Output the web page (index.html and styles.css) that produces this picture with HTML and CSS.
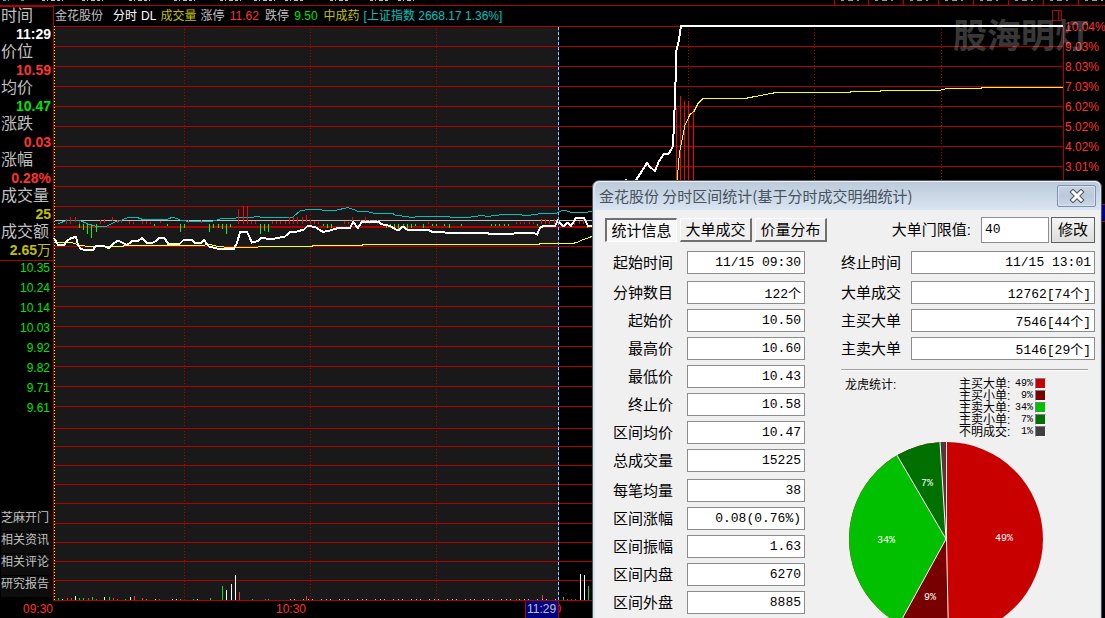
FILE: index.html
```html
<!DOCTYPE html>
<html lang="zh-CN">
<head>
<meta charset="utf-8">
<title>金花股份 分时</title>
<link rel="stylesheet" href="styles.css">
</head>
<body>
<div class="app">
  <div class="topstrip">
    <svg class="strip-marks" viewBox="0 0 834 5" preserveAspectRatio="xMinYMin slice" aria-hidden="true">
      <path class="mark-cyan" d="M3 .5H10M21 .5H25"/>
      <path class="mark-grey" d="M42 .5H66M82 .5H104M129 .5H151M174 .5H197M220 .5H242M254 .5H276M285 .5H305M330 .5H350M370 .5H388M398 .5H414"/>
    </svg>
    <div class="strip-tabs"><i></i><i></i><i></i><i></i><i></i><i></i><i></i><i></i></div>
  </div>
  <div class="workspace">
    <aside class="side">
      <dl class="quote">
        <dt>时间</dt><dd class="white">11:29</dd>
        <dt>价位</dt><dd class="up">10.59</dd>
        <dt>均价</dt><dd class="down">10.47</dd>
        <dt>涨跌</dt><dd class="up">0.03</dd>
        <dt>涨幅</dt><dd class="up">0.28%</dd>
        <dt>成交量</dt><dd class="gold">25</dd>
        <dt>成交额</dt><dd class="gold">2.65<span class="unit">万</span></dd>
      </dl>
      <ul class="prices">
        <li>10.35</li><li>10.24</li><li>10.14</li><li>10.03</li><li>9.92</li><li>9.82</li><li>9.71</li><li>9.61</li>
      </ul>
      <nav class="links">
        <a href="#">芝麻开门</a><a href="#">相关资讯</a><a href="#">相关评论</a><a href="#">研究报告</a>
      </nav>
    </aside>
    <main class="chart">
      <header class="chart-head">
        <span class="stock">金花股份</span><span class="white mode">分时</span><span class="white">DL</span><span class="gold">成交量</span><span>涨停 <b class="up">11.62</b></span><span>跌停 <b class="down">9.50</b></span><span class="gold">中成药</span><span class="index">[上证指数 2668.17 1.36%]</span>
        <svg class="pane-icon" viewBox="0 0 10 11" aria-hidden="true"><path d="M.5 .5H9.500V10.500H.5ZM6.500 .5V10.500"/></svg>
      </header>
      <svg class="plot" viewBox="53 26 1011 575" preserveAspectRatio="none" role="img" aria-label="分时走势图">
        <rect class="selected" x="54" y="26" width="505" height="575"/>
        <path class="grid" d="M54 26.500H1064M54 46.500H1064M54 66.500H1064M54 86.500H1064M54 106.500H1064M54 126.500H1064M54 146.500H1064M54 166.500H1064M54 186.500H1064M54 206.500H1064M54 246.500H1064M54 266.500H1064M54 286.500H1064M54 306.500H1064M54 326.500H1064M54 346.500H1064M54 366.500H1064M54 386.500H1064M54 406.500H1064M54 428.500H1064M54 446.500H1064M54 465.500H1064M54 484.500H1064M54 503.500H1064M54 523.500H1064M54 542.500H1064M54 561.500H1064M54 580.500H1064M1063.500 26V601"/>
        <path class="grid mid" d="M54 227H1064"/>
        <path class="dots" d="M184.500 29V600M310.500 29V600M436.500 29V600M688.500 29V600M814.500 29V600M941.500 29V600"/>
        <path class="grid" d="M53.500 26V601M53 600.500H1064"/>
        <path class="edge" d="M54.500 26V600"/>
        <path class="base" d="M55 220.500H1063"/>
        <path class="index-line" d="M58 224L66 220.500H80L88 224 95 226H107L115 222 122 220 128 217.500H137L143 219.500H167L173 217 180 220 193 222 213 221 222 218.500H233L240 217.500H252L257 216 263 218 280 217H293L300 211 310 209 333 211 348 207.500 360 212 367 211.500 373 213H392L395 215 413 217.500 420 216H443L450 217 467 218 473 216.500 483 215.500 487 216.500 503 214.500H517L527 215.500 542 213.500 557 213 563 210 572 212.500H587L590 211 600 213"/>
        <path class="rise" d="M66.500 219V224M70.500 217V224M75.500 217V222M79.500 221V224M100.500 220V224M104.500 219V223M112.500 217V221M117.500 220V223M121.500 220V223M129.500 221V224M133.500 222V224M142.500 221V224M146.500 221V224M150.500 222V224M160.500 221V223M188.500 220V223M201.500 220V223M238.500 209V224M243.500 206V224M247.500 206V224M251.500 221V224M255.500 221V224M272.500 221V224M276.500 221V224M280.500 221V224M285.500 221V224M289.500 217V224M293.500 217V224M297.500 217V224M302.500 217V224M306.500 215V222M310.500 220V224M314.500 221V224M318.500 222V224M344.500 221V224M348.500 222V224M352.500 217V224M360.500 220V224M365.500 217V224M369.500 220V224M377.500 220V224M428.500 222V224M516.500 222V224M520.500 222V224M524.500 222V224M529.500 222V224M533.500 222V224M541.500 219V224M545.500 219V224M549.500 220V224M554.500 219V224M574.500 221V225M579.500 221V224M583.500 219V224"/>
        <path class="fall" d="M79.500 224V228M83.500 224V230M87.500 224V234M91.500 224V238M96.500 224V232M154.500 224V226M167.500 224V226M180.500 224V232M184.500 224V228M209.500 224V232M213.500 224V228M218.500 224V228M222.500 224V229M226.500 224V234M230.500 224V227M260.500 224V234M264.500 224V231M268.500 224V232M323.500 224V226M327.500 224V228M331.500 224V228M386.500 224V228M390.500 224V228M394.500 224V230M398.500 224V231M403.500 224V228M407.500 224V229M411.500 224V228M415.500 224V226M423.500 224V228M432.500 224V226M436.500 224V226M444.500 224V226M449.500 224V228M461.500 224V226M491.500 224V226M495.500 224V226M499.500 224V226M504.500 224V226M508.500 224V226M537.500 224V226M587.500 224V228"/>
        <path class="rise" d="M676.500 108V200M680.500 96V200M684.500 101V200M688.500 101V200M693.500 109V200"/>
        <path class="average" d="M54.500 242.500H65L72 242.500 80 245.500 90 246.500H122L125 245.500H200L210 244.500 218 246.500 230 247.500H255L262 246.500H312L313 245.500H362L363 244.500H539L540 243.500H572L577 242.500 582 240 592 236.500 677 190 678 170 679.500 153 682 140 685 125 690 114.500 694 111.500 698 103.500 703 98.500H745L755 96.500 766 94.500 776 92.500H850L851 91.500H880L881 90.500H939L947 88.500H981L982 87.500H1063"/>
        <path class="price" d="M54 238L58 245H64L67 241 71 238 76 237 78 245 81 249 87 250.500 93 250 96 245.500H103L109 248.500 113 244 118 240.500 123 243 127 245 133 240.500 138 241 142 238 147 243H152L156 241 159 237.500H164L168 243.500H180L184 239.500H191L195 243H201L204 240 209 246.500 217 248.500H234L237 243 240 232H247L252 242.500 258 241 262 237.500 270 239.500 285 236.500 290 232 297 231.500 304 229.500 308 225.500 316 227.500 323 232 330 230.500 338 228H350L353 222 358 228 362 221.500H378L381 224 390 226 398 230.500 403 226.500 407 229.500H428L433 232.500 442 231.500 445 232.500H486L490 234H513L516 232.500H533L537 234.500 540 228 543 226H555L558 220.500 563 226.500 568 222.500 571 226 574 221 576 218H584L588 226H592L620 190 626 180 631 185 636 180 642 171 647 163 650 167 655 171 659 161 664 154 669 153.500 673 146 674 123 675 98 676.500 50 679 40 681 26H1063"/>
        <path class="vol-red" d="M67.500 598V600M71.500 598V600M88.500 598V600M96.500 599V600M113.500 598V600M117.500 599V600M134.500 596V600M142.500 598V600M159.500 599V600M239.500 592V600M265.500 599V600M306.500 596V600M516.500 599V600M542.500 595V600M567.500 599V600M571.500 599V600M575.500 599V600"/>
        <path class="vol-green" d="M58.500 598V600M79.500 598V600M83.500 598V600M92.500 597V600M109.500 597V600M125.500 599V600M146.500 599V600M180.500 599V600M193.500 599V600M210.500 598V600M222.500 586V600M252.500 599V600M268.500 599V600M563.500 597V600M588.500 586V600"/>
        <path class="vol-white" d="M62.500 599V600M75.500 596V600M104.500 597V600M130.500 597V600M155.500 599V600M172.500 599V600M176.500 599V600M197.500 599V600M226.500 590V600M231.500 584V600M235.500 575V600M580.500 574V600M584.500 575V600"/>
        <path class="vol-rest" d="M290 599.500H558"/>
        <path class="cursor-base" d="M558.500 27V601"/><path class="cursor" d="M558.500 27V601"/>
      </svg>
    </main>
    <ul class="percent">
      <li>10.04%</li><li>9.03%</li><li>8.03%</li><li>7.03%</li><li>6.02%</li><li>5.02%</li><li>4.02%</li><li>3.01%</li>
      <li class="price-tag" aria-hidden="true"></li>
    </ul>
  </div>
  <footer class="times">
    <span>09:30</span><span>10:30</span><span>11:30</span><span class="now">11:29</span>
  </footer>
  <div class="watermark">股海明灯</div>

  <section class="dialog" role="dialog" aria-labelledby="dialog-title">
    <header class="titlebar">
      <h1 id="dialog-title">金花股份 分时区间统计(基于分时成交明细统计)</h1>
      <button class="close" type="button" aria-label="关闭">
        <svg viewBox="0 0 16 14" aria-hidden="true"><path class="x-outer" d="M4 3L12 11M12 3L4 11"/><path class="x-inner" d="M4 3L12 11M12 3L4 11"/></svg>
      </button>
    </header>
    <div class="client">
      <div class="toolbar">
        <div class="tabs">
          <button class="tab active" type="button">统计信息</button>
          <button class="tab" type="button">大单成交</button>
          <button class="tab" type="button">价量分布</button>
        </div>
        <label class="limit-label" for="limit">大单门限值:</label>
        <input class="limit" id="limit" value="40">
        <button class="modify" type="button">修改</button>
      </div>
      <div class="columns">
        <div class="groups left">
          <div class="fields">
            <label for="a1">起始时间</label><input id="a1" value="11/15 09:30" readonly>
          </div>
          <div class="fields">
            <label for="a2">分钟数目</label><input id="a2" value="122个" readonly>
            <label for="a3">起始价</label><input id="a3" value="10.50" readonly>
            <label for="a4">最高价</label><input id="a4" value="10.60" readonly>
            <label for="a5">最低价</label><input id="a5" value="10.43" readonly>
            <label for="a6">终止价</label><input id="a6" value="10.58" readonly>
            <label for="a7">区间均价</label><input id="a7" value="10.47" readonly>
            <label for="a8">总成交量</label><input id="a8" value="15225" readonly>
          </div>
          <div class="fields">
            <label for="a9">每笔均量</label><input id="a9" value="38" readonly>
            <label for="a10">区间涨幅</label><input id="a10" value="0.08(0.76%)" readonly>
            <label for="a11">区间振幅</label><input id="a11" value="1.63" readonly>
            <label for="a12">区间内盘</label><input id="a12" value="6270" readonly>
            <label for="a13">区间外盘</label><input id="a13" value="8885" readonly>
          </div>
        </div>
        <div class="right">
          <div class="groups">
            <div class="fields">
              <label for="b1">终止时间</label><input id="b1" value="11/15 13:01" readonly>
            </div>
            <div class="fields">
              <label for="b2">大单成交</label><input id="b2" value="12762[74个]" readonly>
              <label for="b3">主买大单</label><input id="b3" value="7546[44个]" readonly>
              <label for="b4">主卖大单</label><input id="b4" value="5146[29个]" readonly>
            </div>
          </div>
          <div class="summary">
            <h2>龙虎统计:</h2>
            <ul class="legend">
              <li><span>主买大单:</span><b>49%</b><i class="buy-big"></i></li>
              <li><span>主买小单:</span><b>9%</b><i class="buy-small"></i></li>
              <li><span>主卖大单:</span><b>34%</b><i class="sell-big"></i></li>
              <li><span>主卖小单:</span><b>7%</b><i class="sell-small"></i></li>
              <li><span>不明成交:</span><b>1%</b><i class="unknown"></i></li>
            </ul>
          </div>
          <svg class="pie" viewBox="0 0 196 196" role="img" aria-label="龙虎统计">
            <circle class="fill-buy-big" cx="98" cy="98" r="97"/>
            <path class="fill-buy-small" d="M98 98L100.500 195A97 97 0 0 1 51.300 183Z"/>
            <path class="fill-sell-big" d="M98 98L51.300 183A97 97 0 0 1 49 14.300Z"/>
            <path class="fill-sell-small" d="M98 98L49 14.300A97 97 0 0 1 92 1.200Z"/>
            <path class="fill-unknown" d="M98 98L92 1.200A97 97 0 0 1 97 1Z"/>
            <path class="spokes" d="M98.500 1V98L100.500 195M98 98L51.300 183M98 98L49 14.300M98 98L92 1.200"/>
            <text x="156" y="100">49%</text><text x="82" y="159">9%</text><text x="38" y="102">34%</text><text x="79" y="45">7%</text>
          </svg>
        </div>
      </div>
    </div>
  </section>
</div>
</body>
</html>
```
FILE: styles.css
```css
* { box-sizing: border-box; }
body {
  margin: 0;
  background: #000;
  color: #c0c0c0;
  font: 12px/20px "Liberation Sans", "Noto Sans CJK SC", sans-serif;
}
ul, dl, dd, h1, h2 { margin: 0; padding: 0; list-style: none; }
b { font-weight: normal; }
svg { display: block; }
.up { color: #ff3232; }
.down { color: #00e600; }
.gold { color: #c0c000; }
.white { color: #fff; }

.app {
  position: relative;
  display: flex;
  flex-direction: column;
  height: 100vh;
  overflow: hidden;
}

/* clipped toolbar */
.topstrip { display: flex; height: 6px; border-bottom: 1px solid #b00000; }
.strip-marks { flex: 1; min-width: 0; height: 5px; }
.strip-marks path { stroke-width: 1; stroke-dasharray: 3 2 1 3 4 2; fill: none; }
.mark-cyan { stroke: #00c0c0; }
.mark-grey { stroke: #c0c0c0; }
.strip-tabs { display: flex; }
.strip-tabs i { width: 35px; border-left: 1px solid #b00000; background: linear-gradient(90deg, transparent 6px, #999 6px, #999 9px, transparent 9px, transparent 13px, #999 13px, #999 18px, transparent 18px, transparent 22px, #999 22px, #999 24px, transparent 24px) 0 0 / 100% 1px no-repeat; }
.strip-tabs i:first-child { width: 34px; }
.strip-tabs i:last-child { width: 27px; }

.workspace { display: flex; flex: 1; min-height: 0; }

/* left column */
.side { display: flex; flex-direction: column; width: 53px; border-top: 1px solid #b00000; }
.quote { padding-bottom: 1px; border-bottom: 1px solid #b00000; }
.quote dt { font-size: 16px; line-height: 18px; padding-left: 1px; white-space: nowrap; }
.quote dd { font-size: 14px; line-height: 18px; font-weight: bold; text-align: right; padding-right: 2px; }
.quote .unit { font-weight: normal; }
.prices { padding: 0 3px 0 0; margin-top: -3px; text-align: right; color: #00e600; }
.links { display: flex; flex-direction: column; gap: 1px; margin: auto 1px 4px 1px; }
.links a { background: #0d0d0d; color: #c0c0c0; text-decoration: none; line-height: 17px; padding-bottom: 4px; white-space: nowrap; }

/* chart */
.chart { display: flex; flex-direction: column; flex: 1; min-width: 0; }
.chart-head { display: flex; gap: 4px; height: 20px; padding: 0 2px 0 1px; border-left: 1px solid #b00000; white-space: pre; }
.chart-head .mode { margin: 0 0 0 6px; }
.chart-head b { margin: 0 2px; }
.chart-head .index { color: #00c0c0; }
.pane-icon { width: 10px; height: 11px; margin: 4px 0 0 auto; fill: none; stroke: #b00000; }
.plot { flex: 1; width: 100%; min-height: 0; overflow: visible; fill: none; shape-rendering: crispEdges; }
.selected { fill: #191919; }
.grid { stroke: #b00000; }
.mid { stroke-width: 2; }
.dots { stroke: #b00000; stroke-dasharray: 1 2; }
.edge { stroke: #ffff00; stroke-dasharray: 1 2; }
.base { stroke: #c0c0c0; }
.index-line { stroke: #00c0c0; }
.rise { stroke: #ff0000; }
.fall { stroke: #00ff00; }
.average { stroke: #ffff00; }
.price { stroke: #fff; stroke-width: 2; }
.vol-red { stroke: #ff3232; }
.vol-green { stroke: #00e600; }
.vol-white { stroke: #fff; }
.vol-rest { stroke: #c0c0c0; stroke-dasharray: 1 3 1 8 1 4; }
.cursor-base { stroke: #2020c0; }
.cursor { stroke: #80e0e0; stroke-dasharray: 3 2; }

/* right axis */
.percent { width: 41px; padding: 11px 0 0 1px; color: #ff3232; white-space: nowrap; }
.price-tag { height: 18px; margin-top: 27px; background: #000080; border: solid #b00000; border-width: 1px 0; }

.times { position: relative; height: 17px; color: #ff3232; line-height: 17px; }
.times span { position: absolute; left: 23px; top: 0; }
.times span:nth-child(2) { left: 276px; }
.times span:nth-child(3) { left: 532px; }
.times .now { left: 525px; width: 34px; padding-left: 1px; background: #000080; color: #c0c0c0; border: solid #b00000; border-width: 0 1px; }
.watermark { position: absolute; right: 16px; top: 9px; font: bold 34px/50px "Noto Sans CJK SC", sans-serif; color: rgba(255, 255, 255, .24); }

/* dialog */
.dialog {
  position: absolute;
  left: 592px;
  right: 3px;
  top: 180px;
  padding: 0 1px 0 2px;
  background: #d6e3f2;
  border: 1px solid #50555c;
  border-radius: 7px 7px 0 0;
  color: #000;
  font-size: 15px;
}
.titlebar { display: flex; justify-content: space-between; height: 29px; padding: 3px 4px 0; background: linear-gradient(#bdcad9, #d9e5f2); border-top: 1px solid #eef3f8; border-radius: 6px 6px 0 0; }
.titlebar h1 { font: 15px/22px "Noto Sans CJK SC", sans-serif; color: #46525e; white-space: nowrap; }
.close { display: flex; align-items: center; justify-content: center; width: 39px; height: 22px; padding: 0; background: linear-gradient(#c5d2e1, #bac9dc 50%, #c9d7e7); border: 1px solid #8190b0; border-radius: 2px; box-shadow: inset 0 0 0 1px #d6e1ee; }
.close svg { width: 16px; height: 14px; stroke-linecap: square; }
.x-outer { stroke: #505560; stroke-width: 5; }
.x-inner { stroke: #fff; stroke-width: 3; }
.client { padding: 6px 5px 20px 10px; background: #f0f0f0; }
.toolbar { display: flex; align-items: center; height: 27px; }
.tabs { display: flex; gap: 3px; }
button { font-family: inherit; color: #000; }
.tab { width: 72px; height: 24px; padding: 1px 0 0; font-size: 15px; line-height: 18px; white-space: nowrap; background: #f0f0f0; border: 1px solid #fff; border-right: 2px solid #707070; border-bottom: 2px solid #707070; }
.tab.active { background: #f8f8f8; border: 2px solid #707070; border-right: 1px solid #fff; border-bottom: 1px solid #fff; }
.limit-label { margin-left: auto; margin-right: 10px; }
input { min-width: 0; height: 23px; padding: 0 3px; border: 1px solid #8c8c8c; border-radius: 0; background: #fff; color: #000; font: 13px/20px "Liberation Mono", "Noto Sans CJK SC", monospace; text-align: right; }
.limit { width: 68px; height: 26px; text-align: left; }
.modify { width: 44px; height: 26px; margin-left: 2px; padding: 0; font-size: 15px; line-height: 20px; background: linear-gradient(#f4f4f4, #dedede); border: 1px solid #606060; }
.columns { display: grid; grid-template-columns: 200px 1fr; gap: 36px; padding-top: 8px; }
.groups { display: flex; flex-direction: column; gap: 7px; }
.fields { display: grid; grid-template-columns: 60px 1fr; gap: 5px 10px; align-items: center; }
.left .fields { grid-template-columns: 68px 1fr; column-gap: 14px; }
.fields label { text-align: right; line-height: 23px; white-space: nowrap; }
.summary { display: flex; justify-content: space-between; margin: 9px 7px 0 0; padding: 8px 42px 0 4px; border-top: 1px solid #a0a0a0; box-shadow: inset 0 1px #fff; }
.summary h2 { font-size: 12px; font-weight: normal; line-height: 14px; }
.legend { font-size: 12px; line-height: 12px; }
.legend li { display: grid; grid-template-columns: 54px 18px 11px; column-gap: 2px; height: 12px; }
.legend b { font: 10px/12px "Liberation Mono", monospace; text-align: right; }
.legend i { height: 11px; border: 1px solid #fff; border-top-color: #808080; border-left-color: #808080; }
.buy-big { background: #c80000; }
.buy-small { background: #780000; }
.sell-big { background: #00c000; }
.sell-small { background: #007000; }
.unknown { background: #404040; }
.pie { width: 196px; height: 196px; margin: 3px 0 0 7px; }
.fill-buy-big { fill: #c80000; }
.fill-buy-small { fill: #780000; }
.fill-sell-big { fill: #00c000; }
.fill-sell-small { fill: #007000; }
.fill-unknown { fill: #404040; }
.spokes { fill: none; stroke: #fff; }
.pie text { fill: #fff; font: 10px "Liberation Mono", monospace; text-anchor: middle; }
```
